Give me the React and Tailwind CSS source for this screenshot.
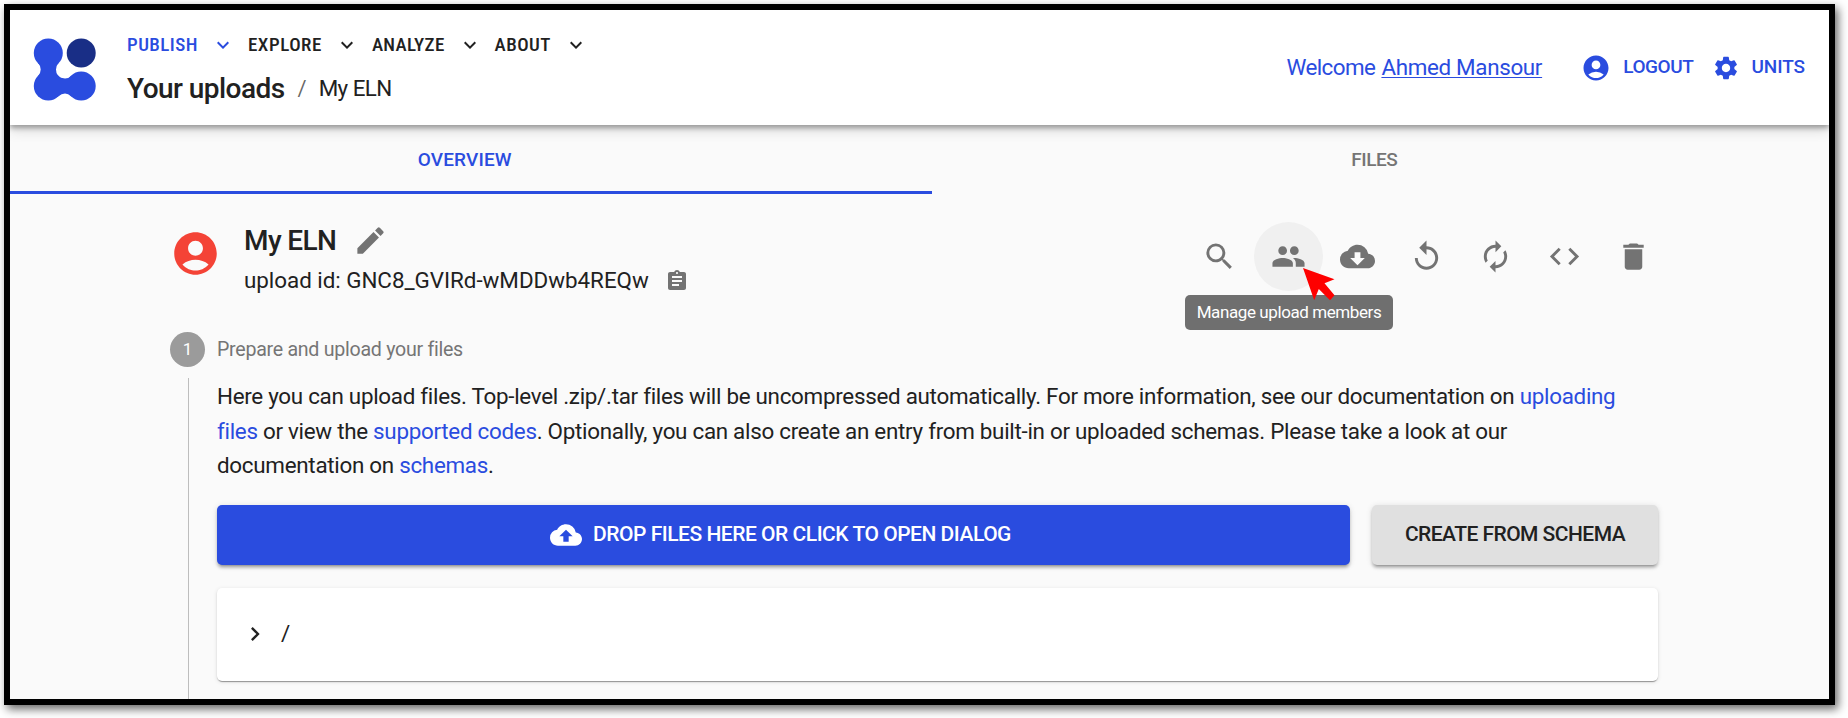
import React from "react";
import {
  MdAccountCircle,
  MdAssignment,
  MdAutorenew,
  MdChevronRight,
  MdCloudDownload,
  MdCloudUpload,
  MdCode,
  MdDelete,
  MdEdit,
  MdExpandMore,
  MdPeople,
  MdReplay,
  MdSearch,
  MdSettings,
} from "react-icons/md";

function Logo() {
  return (
    <svg className="mt-7 size-16 shrink-0" viewBox="0 0 64 64" aria-hidden="true">
      <g fill="#2a4cdf">
        <circle cx="15.3" cy="14.9" r="14.5" />
        <circle cx="15.3" cy="48.1" r="14.5" />
        <circle cx="48.2" cy="48.1" r="14.5" />
        <path d="M5.1 25.1Q7.7 28 7.7 31.5Q7.7 35 5.1 37.9L15.3 48.1L25.5 58.3Q28.5 55.6 32 55.6Q35.3 55.6 38 58.3L48.2 48.1L38 37.9Q35.5 40.4 32 40.4Q23 40.4 23 31.5Q23 28 25.5 25.1L15.3 14.9Z" />
      </g>
      <circle cx="48.2" cy="14.9" r="14.5" fill="#192e86" />
    </svg>
  );
}

const menus = [
  { label: "PUBLISH", style: "text-[#2a4cdf] tracking-[0.45px]" },
  { label: "EXPLORE", style: "tracking-[0.53px]" },
  { label: "ANALYZE", style: "tracking-[0.33px]" },
  { label: "ABOUT", style: "tracking-[0.45px]" },
];

function Header() {
  return (
    <header className="relative z-10 flex h-[115px] shrink-0 bg-white pr-6 pl-[23px] shadow-[0_3px_5px_rgba(0,0,0,0.32),0_6px_12px_rgba(0,0,0,0.12)]">
      <Logo />
      <div className="ml-[30px] pt-[17px]">
        <nav className="flex h-9 items-center gap-[13px] text-[19px] font-medium [font-stretch:75%]">
          {menus.map((m) => (
            <button key={m.label} className={`flex items-center gap-[13px] ${m.style}`}>
              {m.label}
              <MdExpandMore className="size-6" />
            </button>
          ))}
        </nav>
        <div className="flex h-[51px] items-center">
          <span className="text-[28px] font-medium tracking-[-0.55px]">Your uploads</span>
          <span className="ml-[13px] text-[22px] text-black/60">/</span>
          <span className="ml-3 text-[22.4px] tracking-[-0.55px]">My ELN</span>
        </div>
      </div>
      <div className="ml-auto flex items-center text-[#2a4cdf]">
        <span className="text-[22.4px] tracking-[-0.55px]">Welcome</span>
        <a className="ml-1.5 text-[22.4px] tracking-[-0.33px] underline decoration-1 underline-offset-2">Ahmed Mansour</a>
        <button className="ml-[39px] flex items-center gap-3 text-[19px] font-medium tracking-[-0.4px]">
          <MdAccountCircle className="size-[30px]" />
          LOGOUT
        </button>
        <button className="ml-[18px] flex items-center gap-3 text-[19px] font-medium tracking-[-0.1px]">
          <MdSettings className="size-7" />
          UNITS
        </button>
      </div>
    </header>
  );
}

function Tabs() {
  return (
    <div className="shrink-0">
      <div className="grid h-[66px] grid-cols-2 pt-[5px] text-[19px] font-medium">
        <button className="tracking-[0.15px] text-[#2a4cdf]">OVERVIEW</button>
        <button className="tracking-[-0.45px] text-[#757575]">FILES</button>
      </div>
      <div className="h-[3px] w-[922px] bg-[#2a4cdf]" />
    </div>
  );
}

const actions = [MdSearch, MdPeople, MdCloudDownload, MdReplay, MdAutorenew, MdCode, MdDelete];

function Actions() {
  return (
    <div className="mt-px ml-auto flex">
      {actions.map((Icon, i) => (
        <div
          key={i}
          className={`relative flex size-[69px] items-center justify-center rounded-full ${i === 1 ? "z-10 bg-[#f0f0f0]" : ""}`}
        >
          <Icon className="size-[35px] text-[#737373]" />
          {i === 1 && (
            <>
              <div className="absolute top-[73px] left-[-69px] flex h-[35px] w-[208px] items-center justify-center rounded-[5px] bg-[#6f6f6f] text-[17px] tracking-[-0.41px] whitespace-nowrap text-white">
                Manage upload members
              </div>
              <svg className="absolute top-[46px] left-[49px] h-[33px] w-8" viewBox="0 0 32 33" aria-hidden="true">
                <path d="M0 0L31.5 11.2L21.5 15.3L31.5 27.3L27 32.3L15.8 21L11.2 32.3Z" fill="#fe0000" />
              </svg>
            </>
          )}
        </div>
      ))}
    </div>
  );
}

function UploadHeader() {
  return (
    <div className="mt-[27px] flex h-20 items-start pr-[161px] pl-40">
      <MdAccountCircle className="mt-[7px] size-[51px] text-[#f44336]" />
      <div className="ml-[23px]">
        <div className="flex h-10 items-center gap-[17px]">
          <h1 className="text-[28px] font-medium tracking-[-0.6px]">My ELN</h1>
          <MdEdit className="mb-0.5 size-[35px] text-[#737373]" />
        </div>
        <div className="flex h-10 items-center gap-4">
          <span className="text-[22.4px] tracking-[-0.03px]">upload id: GNC8_GVIRd-wMDDwb4REQw</span>
          <MdAssignment className="size-6 text-[#737373]" />
        </div>
      </div>
      <Actions />
    </div>
  );
}

function Link({ children }) {
  return <a className="text-[#2a4cdf]">{children}</a>;
}

function UploadStep() {
  return (
    <section className="mt-[31px] flex min-h-0 flex-1 flex-col pr-[171px] pl-40">
      <div className="flex h-[35px] items-center gap-3">
        <span className="flex size-[35px] items-center justify-center rounded-full bg-[#9b9b9b] text-[17px] text-white">1</span>
        <span className="pt-px text-[19.6px] tracking-[-0.27px] text-[#757575]">Prepare and upload your files</span>
      </div>
      <div className="mt-[11px] ml-[18px] flex-1 border-l border-[#bdbdbd] pt-px pl-7">
        <p className="max-w-[1425px] text-[22.4px] leading-[34.5px] tracking-[-0.285px]">
          Here you can upload files. Top-level .zip/.tar files will be uncompressed automatically. For more information, see
          our documentation on <Link>uploading files</Link> or view the <Link>supported codes</Link>. Optionally, you can also
          create an entry from built-in or uploaded schemas. Please take a look at our documentation on{" "}
          <Link>schemas</Link>.
        </p>
        <div className="mt-[22px] flex h-[60px] gap-[22px] text-[21px] font-medium">
          <button className="flex flex-1 items-center justify-center gap-[11px] rounded-[5px] bg-[#2a4cdf] pr-1.5 tracking-[-0.48px] text-white shadow-[0_4px_2px_-3px_rgba(0,0,0,0.2),0_3px_3px_rgba(0,0,0,0.2),0_1px_6px_rgba(0,0,0,0.12)]">
            <MdCloudUpload className="size-8" />
            DROP FILES HERE OR CLICK TO OPEN DIALOG
          </button>
          <button className="w-[286px] rounded-[5px] bg-[#e0e0e0] tracking-[-0.54px] shadow-[0_4px_2px_-3px_rgba(0,0,0,0.2),0_3px_3px_rgba(0,0,0,0.2),0_1px_6px_rgba(0,0,0,0.12)]">
            CREATE FROM SCHEMA
          </button>
        </div>
        <div className="mt-[23px] flex h-[93px] items-center gap-3 rounded-[5px] bg-white pl-6 text-[22.4px] shadow-[0_3px_1px_-2px_rgba(0,0,0,0.2),0_1px_1px_rgba(0,0,0,0.2),0_1px_4px_rgba(0,0,0,0.12)]">
          <MdChevronRight className="size-7" />
          <span>/</span>
        </div>
      </div>
    </section>
  );
}

export default function App() {
  return (
    <div className="h-[718px] w-[1848px] overflow-hidden bg-white pt-1 pl-1 font-[Roboto,sans-serif] text-[#212121]">
      <main className="flex h-[701px] w-[1831px] flex-col overflow-hidden border-[6px] border-black bg-[#fafafa] shadow-[3px_4px_9px_rgba(0,0,0,0.6)]">
        <Header />
        <Tabs />
        <UploadHeader />
        <UploadStep />
      </main>
    </div>
  );
}
